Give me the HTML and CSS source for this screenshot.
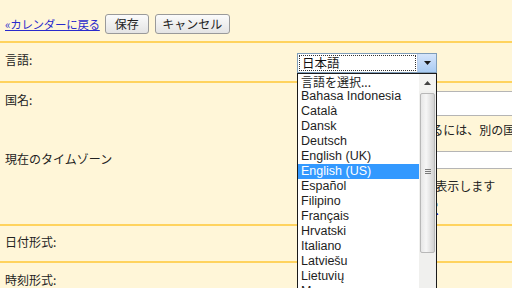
FILE: index.html
```html
<!DOCTYPE html>
<html lang="ja">
<head>
<meta charset="utf-8">
<link rel="stylesheet" href="styles.css">
</head>
<body>
<div class="page">
  <div class="top">
    <a class="back" href="#">«カレンダーに戻る</a>
    <button class="btn save">保存</button>
    <button class="btn cancel">キャンセル</button>
  </div>
  <div class="row r-lang">
    <div class="label">言語:</div>
    <div class="field"></div>
  </div>
  <div class="row r-country">
    <div class="sub s-country">
      <div class="label">国名:</div>
      <div class="field">
        <div class="input tall"></div>
        <div class="help">タイムゾーンを変更するには、別の国を選択してください</div>
      </div>
    </div>
    <div class="sub s-tz">
      <div class="label">現在のタイムゾーン</div>
      <div class="field">
        <div class="input short"></div>
        <div class="help">世界のタイムゾーンを表示します</div>
        <a class="help link" href="#">タイムゾーンの設定</a>
      </div>
    </div>
  </div>
  <div class="row r-date">
    <div class="label">日付形式:</div>
    <div class="field"></div>
  </div>
  <div class="row r-time">
    <div class="label">時刻形式:</div>
    <div class="field"></div>
  </div>

  <div class="dropdown">
    <div class="combo">
      <div class="combo-value"><span class="focus">日本語</span></div>
      <div class="combo-arrow"><svg width="7" height="4" viewBox="0 0 7 4"><path d="M0 0h7L3.5 4z" fill="#1a1a1a"/></svg></div>
    </div>
    <div class="list">
      <ul class="items">
        <li class="jp">言語を選択...</li>
        <li>Bahasa Indonesia</li>
        <li>Català</li>
        <li>Dansk</li>
        <li>Deutsch</li>
        <li>English (UK)</li>
        <li class="sel">English (US)</li>
        <li>Español</li>
        <li>Filipino</li>
        <li>Français</li>
        <li>Hrvatski</li>
        <li>Italiano</li>
        <li>Latviešu</li>
        <li>Lietuvių</li>
        <li>Magyar</li>
      </ul>
      <div class="scrollbar">
        <div class="sb-up"><svg width="7" height="4" viewBox="0 0 7 4"><path d="M0 4h7L3.5 0z" fill="#444"/></svg></div>
        <div class="sb-thumb"><span class="grip"></span></div>
      </div>
    </div>
  </div>
</div>
</body>
</html>
```
FILE: styles.css
```css
html, body {
  margin: 0;
  padding: 0;
}
body {
  background: #fff6d8;
  font-family: "Noto Sans CJK JP", "Liberation Sans", sans-serif;
  font-size: 12px;
  color: #222;
  width: 512px;
  height: 288px;
  overflow: hidden;
}
.page {
  position: relative;
  height: 288px;
  overflow: hidden;
}
.top {
  height: 43px;
  box-sizing: border-box;
  padding: 14px 0 0 5px;
  display: flex;
  align-items: flex-start;
  border-bottom: 2px solid #ffd35e;
}
.back {
  color: #2a2acc;
  text-decoration: underline;
  font-size: 11.5px;
  line-height: 20px;
  margin-right: 5px;
  letter-spacing: -0.3px;
}
.btn {
  height: 20px;
  box-sizing: border-box;
  border: 1px solid #9a9a9a;
  border-radius: 3px;
  background: linear-gradient(#fbfbfb, #e4e4e4);
  font-family: "Noto Sans CJK JP", sans-serif;
  font-size: 12px;
  line-height: 16px;
  color: #222;
  padding: 0;
  margin: 0;
}
.save { width: 44px; margin-right: 6px; }
.cancel { width: 75px; }

.row {
  display: flex;
  border-bottom: 2px solid #ffd35e;
  box-sizing: border-box;
}
.label {
  width: 297px;
  padding-left: 5px;
  box-sizing: border-box;
  line-height: 16px;
  flex: none;
}
.field {
  flex: 1;
}
.r-lang { height: 40px; padding-top: 9px; }
.r-country { height: 143px; flex-direction: column; }
.r-date { height: 37px; padding-top: 8px; }
.r-time { height: 40px; padding-top: 9px; border-bottom: none; }

.sub { display: flex; }
.s-country { padding-top: 8px; height: 60px; box-sizing: border-box; }
.s-country .label { margin-top: 1px; }
.s-tz { padding-top: 8px; }
.input {
  background: #fff;
  border: 1px solid #b5b5b5;
  width: 260px;
  box-sizing: border-box;
}
.input.tall { height: 25px; }
.input.short { height: 18px; }
.s-country .help { margin-top: 6px; padding-left: 15px; }
.s-tz .label { margin-top: 0; }
.s-tz .help { margin-top: 9px; padding-left: 19px; }
.s-tz .link { display: block; margin-top: 6px; padding-left: 34px; color: #2a2acc; text-decoration: underline; }
.help { line-height: 16px; white-space: nowrap; }

/* dropdown popup */
.dropdown {
  position: absolute;
  left: 297px;
  top: 53px;
  width: 140px;
}
.combo {
  height: 20px;
  box-sizing: border-box;
  border: 1px solid #7f9db9;
  background: #fff;
  display: flex;
}
.combo-value {
  flex: 1;
  padding: 1px;
  display: flex;
}
.focus {
  flex: 1;
  border: 1px dotted #333;
  line-height: 14px;
  padding-left: 2px;
  font-size: 12.5px;
  color: #111;
}
.combo-arrow {
  width: 18px;
  background: linear-gradient(#d6e5fb, #a9cbf3);
  border-left: 1px solid #b9cdea;
  display: flex;
  align-items: center;
  justify-content: center;
}
.list {
  position: relative;
  height: 240px;
  box-sizing: border-box;
  border: 1px solid #1a1a1a;
  border-bottom: none;
  background: #fff;
  display: flex;
  overflow: hidden;
}
.items {
  list-style: none;
  margin: 0;
  padding: 0;
  flex: 1;
  font-family: "Liberation Sans", Arial, sans-serif;
  font-size: 12.5px;
}
.items li {
  height: 15px;
  line-height: 15px;
  padding-left: 3px;
  color: #1e1e1e;
  white-space: nowrap;
}
.items li.jp {
  font-family: "Noto Sans CJK JP", sans-serif;
  font-size: 12px;
}
.items li.sel {
  background: #3399ff;
  color: #fff;
}
.scrollbar {
  width: 17px;
  flex: none;
  background: #f0f0ee;
  display: flex;
  flex-direction: column;
  align-items: center;
}
.sb-up {
  width: 17px;
  height: 17px;
  display: flex;
  align-items: center;
  justify-content: center;
  background: #f3f3f1;
}
.sb-thumb {
  width: 15px;
  height: 160px;
  margin-top: 2px;
  box-sizing: border-box;
  border: 1px solid #b8b8b8;
  border-radius: 2px;
  background: linear-gradient(90deg, #e6e6e6, #f6f6f6 40%, #d2d2d2);
  position: relative;
}
.grip {
  position: absolute;
  left: 4px;
  top: 75px;
  width: 6px;
  height: 6px;
  background: repeating-linear-gradient(#7a7a7a 0 1px, transparent 1px 2px);
}
```
